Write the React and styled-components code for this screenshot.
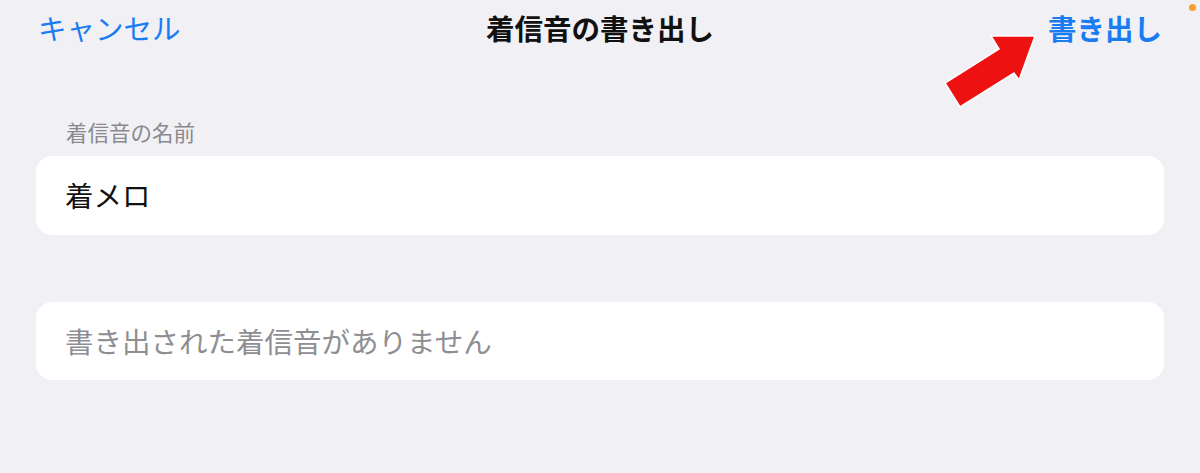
import React from "react";
import styled, { createGlobalStyle } from "styled-components";

const GlobalStyle = createGlobalStyle`
  html, body { margin: 0; padding: 0; background: #f0f0f5; }
  body { font-family: "Noto Sans CJK JP", "Noto Sans", sans-serif; }
`;

const Page = styled.div`
  position: relative;
  width: 1200px;
  height: 473px;
  background: #f0f0f5;
  overflow: hidden;
`;

const Header = styled.header`
  height: 56px;
  display: grid;
  grid-template-columns: 1fr auto 1fr;
  align-items: center;
  padding: 0 38px;
`;

const NavButton = styled.span`
  font-size: 28.5px;
  line-height: 1;
  color: #1a7cf2;
  font-weight: ${(p) => (p.$bold ? 700 : 400)};
  justify-self: ${(p) => (p.$end ? "end" : "start")};
`;

const Title = styled.h1`
  margin: 0;
  font-size: 28.5px;
  line-height: 1;
  font-weight: 700;
  color: #111;
`;

const Content = styled.main`
  padding: 0 36px;
`;

const SectionLabel = styled.div`
  margin-top: 64px;
  margin-bottom: 12px;
  padding-left: 30px;
  font-size: 21.5px;
  line-height: 24px;
  color: #8a8a8e;
`;

const Card = styled.div`
  height: ${(p) => p.$h}px;
  margin-top: ${(p) => p.$mt || 0}px;
  background: #ffffff;
  border-radius: 16px;
  display: flex;
  align-items: center;
  padding: 0 29px;
`;

const CardText = styled.span`
  font-size: 28.5px;
  line-height: 1;
  color: ${(p) => (p.$muted ? "#8e8e93" : "#111")};
`;

const ArrowMark = styled.svg`
  position: absolute;
  left: 0;
  top: 0;
  width: 1200px;
  height: 473px;
  pointer-events: none;
`;

const Dot = styled.span`
  position: absolute;
  top: 4px;
  right: 4px;
  width: 7px;
  height: 7px;
  border-radius: 50%;
  background: #f5a030;
`;

export default function App() {
  return (
    <>
      <GlobalStyle />
      <Page>
        <Header>
          <NavButton>キャンセル</NavButton>
          <Title>着信音の書き出し</Title>
          <NavButton $bold $end>書き出し</NavButton>
        </Header>
        <Content>
          <SectionLabel>着信音の名前</SectionLabel>
          <Card $h={79}>
            <CardText>着メロ</CardText>
          </Card>
          <Card $h={78} $mt={67}>
            <CardText $muted>書き出された着信音がありません</CardText>
          </Card>
        </Content>
        <ArrowMark viewBox="0 0 1200 473">
          <polygon
            points="1035,36 991,36 999,49 945,83 960,107 1014,73 1019,80"
            fill="#ee1111"
            stroke="#ffffff"
            strokeWidth="1.5"
            strokeLinejoin="miter"
          />
        </ArrowMark>
        <Dot />
      </Page>
    </>
  );
}
